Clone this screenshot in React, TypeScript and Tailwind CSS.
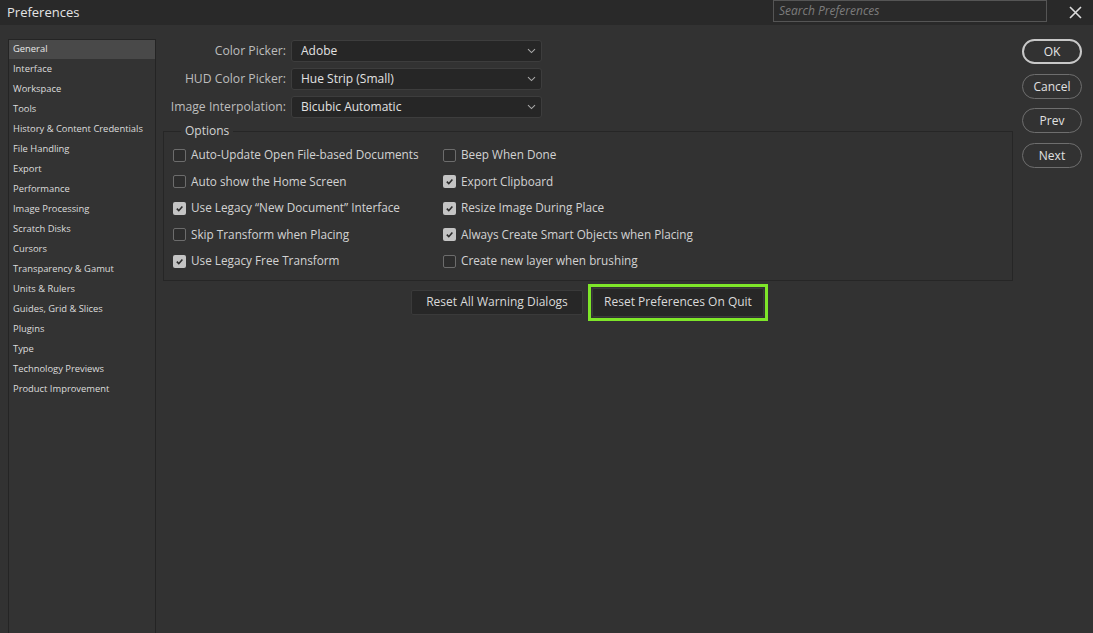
import React from 'react';

const font = { fontFamily: '"Open Sans", "Noto Sans", Arial, sans-serif' };

const navItems = [
  'General',
  'Interface',
  'Workspace',
  'Tools',
  'History & Content Credentials',
  'File Handling',
  'Export',
  'Performance',
  'Image Processing',
  'Scratch Disks',
  'Cursors',
  'Transparency & Gamut',
  'Units & Rulers',
  'Guides, Grid & Slices',
  'Plugins',
  'Type',
  'Technology Previews',
  'Product Improvement',
];

const leftOptions = [
  { label: 'Auto-Update Open File-based Documents', checked: false },
  { label: 'Auto show the Home Screen', checked: false },
  { label: 'Use Legacy \u201CNew Document\u201D Interface', checked: true },
  { label: 'Skip Transform when Placing', checked: false },
  { label: 'Use Legacy Free Transform', checked: true },
];

const rightOptions = [
  { label: 'Beep When Done', checked: false },
  { label: 'Export Clipboard', checked: true },
  { label: 'Resize Image During Place', checked: true },
  { label: 'Always Create Smart Objects when Placing', checked: true },
  { label: 'Create new layer when brushing', checked: false },
];

const selects = [
  { label: 'Color Picker:', value: 'Adobe' },
  { label: 'HUD Color Picker:', value: 'Hue Strip (Small)' },
  { label: 'Image Interpolation:', value: 'Bicubic Automatic' },
];

const Checkbox: React.FC<{ checked: boolean }> = ({ checked }) => (
  <span
    className={
      checked
        ? 'flex h-[13px] w-[13px] items-center justify-center rounded-[2px] bg-[#c4c4c4]'
        : 'h-[13px] w-[13px] rounded-[2px] border border-[#6c6c6c] bg-[#2d2d2d]'
    }
  >
    {checked && (
      <svg width="9" height="9" viewBox="0 0 10 10">
        <path d="M2 5.2 L4.2 7.4 L8.2 2.8" fill="none" stroke="#2b2b2b" strokeWidth="1.8" />
      </svg>
    )}
  </span>
);

const OptionRow: React.FC<{ label: string; checked: boolean }> = ({ label, checked }) => (
  <div className="flex h-[26.5px] items-center gap-[5px]">
    <Checkbox checked={checked} />
    <span className="text-[11.75px] text-[#d2d2d2]">{label}</span>
  </div>
);

const PillButton: React.FC<{ label: string; primary?: boolean; className?: string }> = ({ label, primary, className }) => (
  <button
    className={
      (primary
        ? 'h-[25px] w-[60px] rounded-full border-2 border-[#c8c8c8] text-[12px] text-[#e6e6e6] '
        : 'h-[25px] w-[60px] rounded-full border border-[#6e6e6e] text-[12px] text-[#e0e0e0] ') + (className ?? '')
    }
  >
    {label}
  </button>
);

export default function App() {
  return (
    <div className="flex h-[633px] w-[1093px] flex-col overflow-hidden bg-[#323232]" style={font}>
      {/* title bar */}
      <div className="flex h-[25px] shrink-0 items-center bg-[#292929] pl-[7px]">
        <span className="text-[13px] text-[#e4e4e4]">Preferences</span>
        <div className="ml-auto flex h-full items-start">
          <div className="flex h-[22px] w-[274px] items-center border border-[#555555] bg-[#2a2a2a] px-[5px]">
            <span className="text-[12px] italic text-[#7c7c7c]">Search Preferences</span>
          </div>
          <div className="flex h-[24px] w-[46px] items-center justify-end pr-[11px]">
            <svg width="13" height="13" viewBox="0 0 13 13">
              <path d="M1 1 L12 12 M12 1 L1 12" stroke="#dcdcdc" strokeWidth="1.6" />
            </svg>
          </div>
        </div>
      </div>

      {/* body */}
      <div className="flex min-h-0 flex-1">
        {/* sidebar */}
        <div className="ml-[8px] mt-[14px] flex w-[148px] shrink-0 flex-col border-x border-t border-[#242424] bg-[#333333]">
          {navItems.map((item, i) => (
            <div
              key={item}
              className={
                i === 0
                  ? 'flex h-[19px] items-center bg-[#494949] pl-[4px] text-[9.4px] text-[#e6e6e6]'
                  : 'mt-[1px] flex h-[19px] items-center pl-[4px] text-[9.4px] text-[#dcdcdc]'
              }
            >
              {item}
            </div>
          ))}
        </div>

        {/* main */}
        <div className="ml-[7px] mt-[15px] flex w-[850px] shrink-0 flex-col">
          <div className="flex flex-col gap-[6px]">
            {selects.map((s) => (
              <div key={s.label} className="flex items-center">
                <span className="w-[124px] pr-[1px] text-right text-[12.2px] text-[#bdbdbd]">{s.label}</span>
                <div className="ml-[4px] flex h-[22px] w-[251px] items-center justify-between rounded-[3px] border border-[#3d3d3d] bg-[#262626] pl-[9px] pr-[5px]">
                  <span className="text-[12px] text-[#e2e2e2]">{s.value}</span>
                  <svg width="9" height="6" viewBox="0 0 9 6">
                    <path d="M1 1.2 L4.5 4.6 L8 1.2" fill="none" stroke="#a8a8a8" strokeWidth="1.1" />
                  </svg>
                </div>
              </div>
            ))}
          </div>

          <fieldset className="mt-[4px] border border-[#262626] pb-[5px] pl-[9px]">
            <legend className="ml-[8px] px-[4px] text-[12px] text-[#d2d2d2]">Options</legend>
            <div className="mt-[2px] flex">
              <div className="flex w-[270px] flex-col">
                {leftOptions.map((o) => (
                  <OptionRow key={o.label} {...o} />
                ))}
              </div>
              <div className="flex flex-col">
                {rightOptions.map((o) => (
                  <OptionRow key={o.label} {...o} />
                ))}
              </div>
            </div>
          </fieldset>

          <div className="mt-[3px] flex items-center justify-center gap-[5px] pl-[3px]">
            <button className="h-[25px] w-[172px] rounded-[2px] border border-[#3a3a3a] bg-[#272727] text-[12px] text-[#dadada]">
              Reset All Warning Dialogs
            </button>
            <div className="border-[3px] border-[#7ee629] p-[1px]">
              <button className="h-[29px] w-[172px] rounded-[2px] border border-[#3a3a3a] bg-[#272727] text-[12px] text-[#dadada]">
                Reset Preferences On Quit
              </button>
            </div>
          </div>
        </div>

        {/* right buttons */}
        <div className="ml-[9px] mt-[14px] flex flex-col">
          <PillButton label="OK" primary />
          <PillButton label="Cancel" className="mt-[10px]" />
          <PillButton label="Prev" className="mt-[9px]" />
          <PillButton label="Next" className="mt-[10px]" />
        </div>
      </div>
    </div>
  );
}
